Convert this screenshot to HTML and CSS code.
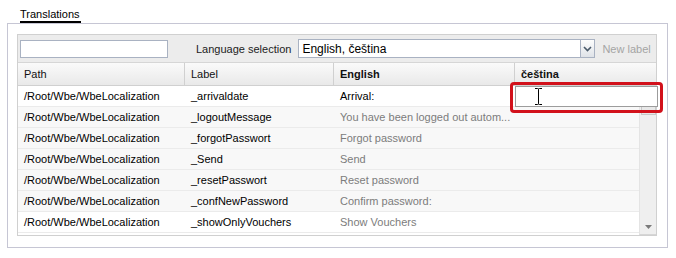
FILE: index.html
```html
<!DOCTYPE html>
<html lang="cs">
<head>
    <meta charset="UTF-8">
    <title>Translations</title>
    <link rel="stylesheet" href="styles.css">
</head>
<body>
    <!-- Tab title -->
    <div class="tab"><span class="tab-title">Translations</span></div>

    <div class="panel">
        <div class="grid">
            <!-- Toolbar with search and language combo -->
            <div class="toolbar">
                <input class="search" type="text">
                <span class="lang-label">Language selection</span>
                <div class="combo">
                    <input class="combo-input" type="text" value="English, čeština">
                    <span class="combo-btn">
                        <svg width="9" height="6" viewBox="0 0 9 6"><path d="M1 1 L4.5 4.5 L8 1" fill="none" stroke="#4a5a6a" stroke-width="1.6"/></svg>
                    </span>
                </div>
                <span class="new-label">New label</span>
            </div>

            <!-- Column headers -->
            <div class="head">
                <div class="hcell c-path">Path</div>
                <div class="hcell c-label">Label</div>
                <div class="hcell c-en bold">English</div>
                <div class="hcell c-cs bold">čeština</div>
            </div>

            <div class="body">
                <div class="rows">
                    <div class="row white">
                        <div class="cell c-path">/Root/Wbe/WbeLocalization</div>
                        <div class="cell c-label">_arrivaldate</div>
                        <div class="cell c-en">Arrival:</div>
                        <div class="cell c-cs2"></div>
                    </div>
                    <div class="row">
                        <div class="cell c-path">/Root/Wbe/WbeLocalization</div>
                        <div class="cell c-label">_logoutMessage</div>
                        <div class="cell c-en grey">You have been logged out autom...</div>
                        <div class="cell c-cs2"></div>
                    </div>
                    <div class="row">
                        <div class="cell c-path">/Root/Wbe/WbeLocalization</div>
                        <div class="cell c-label">_forgotPasswort</div>
                        <div class="cell c-en grey">Forgot password</div>
                        <div class="cell c-cs2"></div>
                    </div>
                    <div class="row">
                        <div class="cell c-path">/Root/Wbe/WbeLocalization</div>
                        <div class="cell c-label">_Send</div>
                        <div class="cell c-en grey">Send</div>
                        <div class="cell c-cs2"></div>
                    </div>
                    <div class="row">
                        <div class="cell c-path">/Root/Wbe/WbeLocalization</div>
                        <div class="cell c-label">_resetPasswort</div>
                        <div class="cell c-en grey">Reset password</div>
                        <div class="cell c-cs2"></div>
                    </div>
                    <div class="row">
                        <div class="cell c-path">/Root/Wbe/WbeLocalization</div>
                        <div class="cell c-label">_confNewPassword</div>
                        <div class="cell c-en grey">Confirm password:</div>
                        <div class="cell c-cs2"></div>
                    </div>
                    <div class="row white">
                        <div class="cell c-path">/Root/Wbe/WbeLocalization</div>
                        <div class="cell c-label">_showOnlyVouchers</div>
                        <div class="cell c-en grey">Show Vouchers</div>
                        <div class="cell c-cs2"></div>
                    </div>
                </div>
                <!-- Vertical scrollbar -->
                <div class="scrollbar">
                    <span class="sb-up"></span>
                    <span class="sb-down">
                        <svg width="7" height="4" viewBox="0 0 7 4"><path d="M0 0 H7 L3.5 4 Z" fill="#7a7a7a"/></svg>
                    </span>
                </div>
            </div>

            <!-- Cell editor over the first čeština cell, with red highlight -->
            <div class="editor">
                <div class="editor-input">
                    <svg class="ibeam" width="9" height="17" viewBox="0 0 9 17"><path d="M1 0.5 H3.5 Q4.5 0.5 4.5 1.5 Q4.5 0.5 5.5 0.5 H8 M4.5 1.5 V15.5 M1 16.5 H3.5 Q4.5 16.5 4.5 15.5 Q4.5 16.5 5.5 16.5 H8" fill="none" stroke="#000" stroke-width="1"/></svg>
                </div>
            </div>
        </div>
    </div>
</body>
</html>
```

FILE: styles.css
```css
body {
    margin: 0;
    background: #fff;
    font-family: "Liberation Sans", Arial, sans-serif;
    font-size: 11px;
    color: #000;
}
.tab {
    padding: 8px 0 0 20px;
    height: 15px;
}
.tab-title {
    display: inline-block;
    line-height: 13px;
    border-bottom: 2px solid #000;
    padding-right: 1px;
}
.panel {
    margin-left: 7px;
    width: 640px;
    border: 1px solid #c6c6d4;
    padding: 10px 10px 11px 9px;
}
.grid {
    position: relative;
    border: 1px solid #d0d0d0;
}
.toolbar {
    display: flex;
    align-items: center;
    height: 27px;
    padding: 0 2px;
    background: #ececec;
    border-bottom: 1px solid #d6d6d6;
}
.search {
    width: 148px;
    height: 18px;
    box-sizing: border-box;
    border: 1px solid #a9b2c2;
    margin: 0;
    padding: 0;
}
.lang-label {
    margin-left: 28px;
    color: #222;
}
.combo {
    display: flex;
    margin-left: 7px;
    height: 19px;
}
.combo-input {
    width: 282px;
    height: 19px;
    box-sizing: border-box;
    border: 1px solid #a9b2c2;
    border-right: none;
    margin: 0;
    padding: 0 3px;
    font-family: "Liberation Sans", Arial, sans-serif;
    font-size: 12px;
    color: #000;
}
.combo-btn {
    width: 15px;
    height: 19px;
    box-sizing: border-box;
    border: 1px solid #a9b2c2;
    background: linear-gradient(#fdfdfd, #dfe3e8);
    display: flex;
    align-items: center;
    justify-content: center;
}
.new-label {
    margin-left: 7px;
    color: #a4a4a4;
}
.head {
    display: flex;
    height: 22px;
    background: linear-gradient(#fafafa, #e9e9e9);
    border-bottom: 1px solid #d0d0d0;
}
.hcell {
    line-height: 23px;
    padding-left: 6px;
    box-sizing: border-box;
    border-right: 1px solid #d0d0d0;
    color: #111;
}
.hcell.c-cs {
    flex: 1;
    border-right: none;
}
.bold {
    font-weight: bold;
}
.c-path { width: 167px; }
.c-label { width: 149px; }
.c-en { width: 181px; }
.c-cs2 { flex: 1; }
.body {
    display: flex;
    height: 149px;
    background: #fff;
}
.rows {
    flex: 1;
}
.row {
    display: flex;
    height: 21px;
    box-sizing: border-box;
    background: #f8f8f8;
    border-bottom: 1px solid #ebebeb;
}
.row.white {
    background: #fff;
}
.cell {
    line-height: 21px;
    padding-left: 6px;
    box-sizing: border-box;
    white-space: nowrap;
    overflow: hidden;
    color: #000;
}
.cell.grey {
    color: #7c7c7c;
}
.scrollbar {
    width: 17px;
    box-sizing: border-box;
    background: #efefef;
    border-left: 1px solid #e4e4e4;
    border-bottom: 1px solid #d6d6d6;
    display: flex;
    flex-direction: column;
    justify-content: space-between;
    align-items: center;
}
.sb-up {
    width: 15px;
    height: 29px;
    box-sizing: border-box;
    border: 1px solid #c8c8c8;
    background: #e8e8e8;
}
.sb-down {
    height: 14px;
    display: flex;
    align-items: center;
}
.editor {
    position: absolute;
    left: 492px;
    top: 47px;
    width: 143px;
    height: 24px;
    border: 3px solid #d2111b;
    border-radius: 4px;
    padding: 1px 2px 0 2px;
}
.editor-input {
    position: relative;
    height: 21px;
    box-sizing: border-box;
    border: 1px solid #9c9c9c;
    background: #fff;
}
.ibeam {
    position: absolute;
    left: 18px;
    top: 1px;
}
```
